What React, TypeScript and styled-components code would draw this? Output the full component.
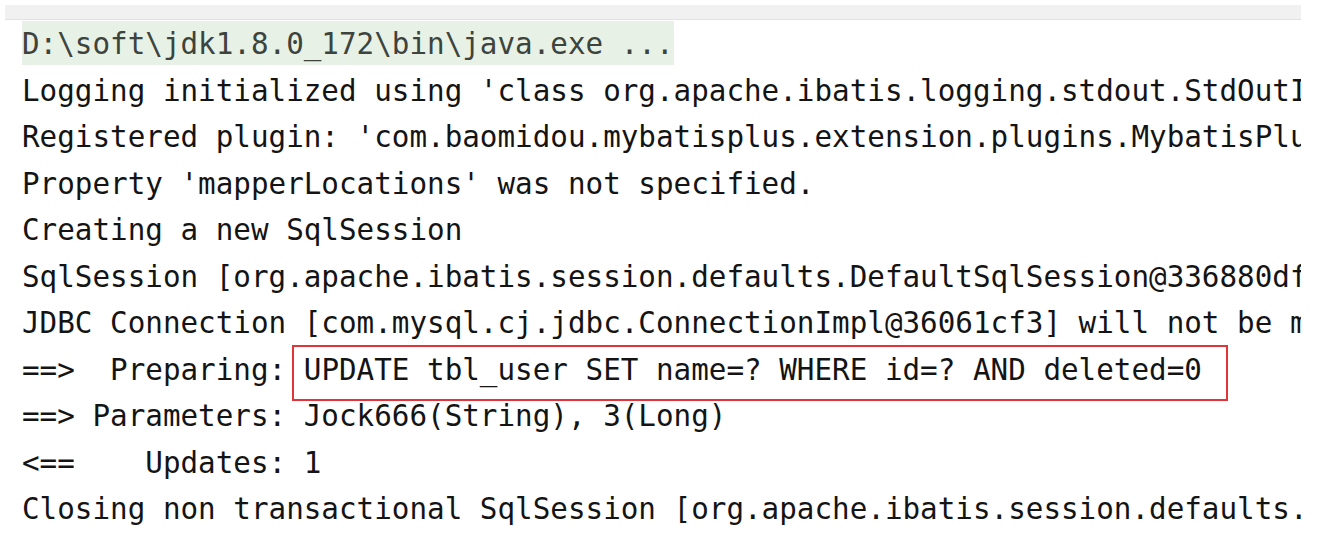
import React from "react";
import styled, { createGlobalStyle } from "styled-components";

const Global = createGlobalStyle`
  html, body { margin: 0; padding: 0; background: #ffffff; }
  body { font-family: "DejaVu Sans Mono", "Liberation Mono", monospace; }
`;

const Page = styled.div`
  padding: 5px 32px 0 5px;
  width: 1333px;
  height: 546px;
  box-sizing: border-box;
  overflow: hidden;
  background: #ffffff;
`;

const Panel = styled.div`
  display: flex;
  flex-direction: column;
  overflow: hidden;
`;

const TopBar = styled.div`
  height: 14px;
  background: #f1f1f1;
  border-bottom: 1px solid #e1e1e1;
`;

const Console = styled.div`
  display: flex;
  flex-direction: column;
  padding: 1px 0 0 17px;
  font-family: "DejaVu Sans Mono", "Liberation Mono", monospace;
  font-size: 29.25px;
  line-height: 46.5px;
  color: #141414;
  white-space: pre;
`;

const Line = styled.div<{ $muted?: boolean }>`
  height: 46.5px;
  color: ${(p) => (p.$muted ? "#3d433d" : "#141414")};
`;

const Highlight = styled.span`
  display: inline-block;
  background: #e7f1e5;
  height: 44px;
  line-height: 46px;
`;

const Marked = styled.span`
  position: relative;
  &::after {
    content: "";
    position: absolute;
    left: -12px;
    right: -26px;
    top: -8px;
    bottom: -14px;
    border: 2px solid #e3343b;
    pointer-events: none;
  }
`;

export default function App() {
  return (
    <>
      <Global />
      <Page>
        <Panel>
          <TopBar />
          <Console>
            <Line $muted>
              <Highlight>{"D:\\soft\\jdk1.8.0_172\\bin\\java.exe ..."}</Highlight>
            </Line>
            <Line>{"Logging initialized using 'class org.apache.ibatis.logging.stdout.StdOutImpl' adapter."}</Line>
            <Line>{"Registered plugin: 'com.baomidou.mybatisplus.extension.plugins.MybatisPlusInterceptor@4d1bf319'"}</Line>
            <Line>{"Property 'mapperLocations' was not specified."}</Line>
            <Line>{"Creating a new SqlSession"}</Line>
            <Line>{"SqlSession [org.apache.ibatis.session.defaults.DefaultSqlSession@336880df] was not registered for synchronization"}</Line>
            <Line>{"JDBC Connection [com.mysql.cj.jdbc.ConnectionImpl@36061cf3] will not be managed by Spring"}</Line>
            <Line>
              {"==>  Preparing: "}
              <Marked>{"UPDATE tbl_user SET name=? WHERE id=? AND deleted=0"}</Marked>
            </Line>
            <Line>{"==> Parameters: Jock666(String), 3(Long)"}</Line>
            <Line>{"<==    Updates: 1"}</Line>
            <Line>{"Closing non transactional SqlSession [org.apache.ibatis.session.defaults.DefaultSqlSession@336880df]"}</Line>
          </Console>
        </Panel>
      </Page>
    </>
  );
}
